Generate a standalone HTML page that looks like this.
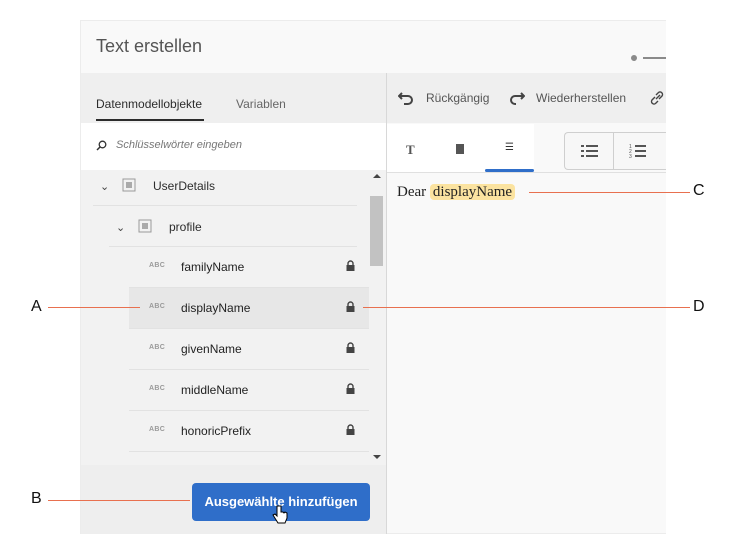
<!DOCTYPE html>
<html><head><meta charset="utf-8"><style>
*{margin:0;padding:0;box-sizing:border-box}
body{width:745px;height:554px;background:#fff;position:relative;overflow:hidden;font-family:"Liberation Sans","DejaVu Sans",sans-serif;color:#2c2c2c}
.a{position:absolute}
.t{font-size:12px}
.row{position:absolute;left:129px;width:240px;height:41px;border-bottom:1px solid #e2e2e2}
.row .abc{position:absolute;left:20px;top:15px;font-size:7px;font-weight:bold;color:#9a9a9a;letter-spacing:.3px}
.row .n{position:absolute;left:52px;top:13px;font-size:12px;color:#222}
.row .lk{position:absolute;left:217px;top:13px}
.ln{position:absolute;height:1px;background:#e8704f}
.lab{position:absolute;font-size:16px;color:#111}
</style></head><body>
<div class="a" style="left:80px;top:20px;width:586px;height:514px;border:1px solid #ececec;border-right:none;background:#f9f9f9"></div>
<div class="a" style="left:96px;top:36px;font-size:18px;color:#555">Text erstellen</div>
<div class="a" style="left:631px;top:55px;width:6px;height:6px;border-radius:50%;background:#8a8a8a"></div>
<div class="a" style="left:643px;top:57px;width:23px;height:2px;background:#8a8a8a"></div>
<!-- left panel -->
<div class="a" style="left:81px;top:73px;width:305px;height:50px;background:#efefef"></div>
<div class="a t" style="left:96px;top:97px;font-size:12px;color:#2c2c2c">Datenmodellobjekte</div>
<div class="a" style="left:96px;top:119px;width:108px;height:2px;background:#2c2c2c"></div>
<div class="a t" style="left:236px;top:97px;color:#666">Variablen</div>
<div class="a" style="left:81px;top:123px;width:305px;height:47px;background:#fff"></div>
<svg class="a" style="left:96px;top:140px" width="11" height="11"><circle cx="6.5" cy="4.5" r="3.3" fill="none" stroke="#333" stroke-width="1.3"/><line x1="4" y1="7" x2="1" y2="10" stroke="#333" stroke-width="1.5"/></svg>
<div class="a" style="left:116px;top:139px;font-size:11px;font-style:italic;color:#777">Schlüsselwörter eingeben</div>
<div class="a" style="left:81px;top:170px;width:305px;height:295px;background:#f2f2f2"></div>
<div class="a" style="left:370px;top:196px;width:13px;height:70px;background:#c2c2c2"></div>
<div class="a" style="left:373px;top:174px;width:0;height:0;border-left:4px solid transparent;border-right:4px solid transparent;border-bottom:4px solid #444"></div>
<div class="a" style="left:373px;top:455px;width:0;height:0;border-left:4px solid transparent;border-right:4px solid transparent;border-top:4px solid #444"></div>
<div class="a" style="left:100px;top:180px;font-size:11px;color:#444">⌄</div>
<svg class="a" style="left:122px;top:178px" width="14" height="14"><rect x="1" y="1" width="12" height="12" fill="none" stroke="#999"/><rect x="4" y="4" width="6" height="6" fill="#aaa"/></svg>
<div class="a t" style="left:153px;top:179px">UserDetails</div>
<div class="a" style="left:93px;top:205px;width:264px;height:1px;background:#e2e2e2"></div>
<div class="a" style="left:116px;top:221px;font-size:11px;color:#444">⌄</div>
<svg class="a" style="left:138px;top:219px" width="14" height="14"><rect x="1" y="1" width="12" height="12" fill="none" stroke="#999"/><rect x="4" y="4" width="6" height="6" fill="#aaa"/></svg>
<div class="a t" style="left:169px;top:220px">profile</div>
<div class="a" style="left:109px;top:246px;width:248px;height:1px;background:#e2e2e2"></div>
<div class="row" style="top:247px"><span class="abc">ABC</span><span class="n">familyName</span><svg class="lk" width="9" height="11"><path d="M2 5V3.5a2.5 2.5 0 0 1 5 0V5" fill="none" stroke="#444" stroke-width="1.4"/><rect x="0.5" y="5" width="8" height="6" fill="#444"/></svg></div>
<div class="row" style="top:288px;background:#e7e7e7"><span class="abc">ABC</span><span class="n">displayName</span><svg class="lk" width="9" height="11"><path d="M2 5V3.5a2.5 2.5 0 0 1 5 0V5" fill="none" stroke="#444" stroke-width="1.4"/><rect x="0.5" y="5" width="8" height="6" fill="#444"/></svg></div>
<div class="row" style="top:329px"><span class="abc">ABC</span><span class="n">givenName</span><svg class="lk" width="9" height="11"><path d="M2 5V3.5a2.5 2.5 0 0 1 5 0V5" fill="none" stroke="#444" stroke-width="1.4"/><rect x="0.5" y="5" width="8" height="6" fill="#444"/></svg></div>
<div class="row" style="top:370px"><span class="abc">ABC</span><span class="n">middleName</span><svg class="lk" width="9" height="11"><path d="M2 5V3.5a2.5 2.5 0 0 1 5 0V5" fill="none" stroke="#444" stroke-width="1.4"/><rect x="0.5" y="5" width="8" height="6" fill="#444"/></svg></div>
<div class="row" style="top:411px"><span class="abc">ABC</span><span class="n">honoricPrefix</span><svg class="lk" width="9" height="11"><path d="M2 5V3.5a2.5 2.5 0 0 1 5 0V5" fill="none" stroke="#444" stroke-width="1.4"/><rect x="0.5" y="5" width="8" height="6" fill="#444"/></svg></div>
<div class="a" style="left:81px;top:465px;width:305px;height:69px;background:#eeeeee"></div>
<div class="a" style="left:192px;top:483px;width:178px;height:38px;background:#2f6ec9;border-radius:4px;color:#fff;font-weight:bold;font-size:13px;text-align:center;line-height:38px">Ausgewählte hinzufügen</div>
<svg class="a" style="left:272px;top:505px" width="16" height="20"><path d="M5 1v10l-2-2-2 1 5 8h7l2-5v-5l-2-1-1 1-1-1-2 0V1z" fill="#fff" stroke="#000" stroke-width="1"/></svg>
<div class="a" style="left:386px;top:73px;width:1px;height:461px;background:#d8d8d8"></div>
<!-- right -->
<div class="a" style="left:387px;top:73px;width:279px;height:50px;background:#efefef"></div>
<svg class="a" style="left:398px;top:91px" width="16" height="14"><path d="M4 2L1 5l3 3M1 5h9a4 4 0 0 1 0 8H6" fill="none" stroke="#444" stroke-width="2"/></svg>
<div class="a t" style="left:426px;top:91px;color:#555">Rückgängig</div>
<svg class="a" style="left:509px;top:91px" width="16" height="14"><path d="M12 2l3 3-3 3M15 5H6a4 4 0 0 0 0 8h1" fill="none" stroke="#444" stroke-width="2"/></svg>
<div class="a t" style="left:536px;top:91px;color:#555">Wiederherstellen</div>
<svg class="a" style="left:649px;top:90px" width="16" height="16"><path d="M7 9l4-4M6 7L3 10a2.5 2.5 0 0 0 3.5 3.5L9 11M10 9l3-3A2.5 2.5 0 0 0 9.5 2.5L7 5" fill="none" stroke="#444" stroke-width="1.4"/></svg>
<div class="a" style="left:387px;top:123px;width:279px;height:49px;background:#f9f9f9"></div>
<div class="a" style="left:387px;top:124px;width:147px;height:48px;background:#fff"></div>
<div class="a" style="left:406px;top:142px;font-size:13px;font-weight:bold;color:#555;font-family:'Liberation Serif',serif">T</div>
<div class="a" style="left:456px;top:144px;width:8px;height:10px;background:#555"></div>
<div class="a" style="left:505px;top:142px;font-size:10px;color:#333">☰</div>
<div class="a" style="left:485px;top:169px;width:49px;height:3px;background:#2f6ec9;border-radius:2px"></div>
<div class="a" style="left:564px;top:132px;width:102px;height:38px;border:1px solid #cfcfcf;border-right:none;border-radius:4px 0 0 4px;background:#f7f7f7"></div>
<div class="a" style="left:613px;top:132px;width:1px;height:38px;background:#cfcfcf"></div>
<svg class="a" style="left:581px;top:145px" width="18" height="13"><g fill="#555"><rect x="0" y="0" width="3" height="2"/><rect x="5" y="0" width="12" height="2"/><rect x="0" y="5" width="3" height="2"/><rect x="5" y="5" width="12" height="2"/><rect x="0" y="10" width="3" height="2"/><rect x="5" y="10" width="12" height="2"/></g></svg>
<svg class="a" style="left:629px;top:142px" width="18" height="18"><g fill="#555"><rect x="6" y="3" width="11" height="2"/><rect x="6" y="8" width="11" height="2"/><rect x="6" y="13" width="11" height="2"/></g><text x="0" y="6" font-size="5" fill="#555">1</text><text x="0" y="11" font-size="5" fill="#555">2</text><text x="0" y="16" font-size="5" fill="#555">3</text></svg>
<div class="a" style="left:387px;top:172px;width:279px;height:1px;background:#e0e0e0"></div>
<div class="a" style="left:397px;top:184px;font-family:'Liberation Serif',serif;font-size:15px;color:#222">Dear <span style="background:#fbe3a0;border-radius:4px;padding:0 3px">displayName</span></div>
<!-- annotations -->
<div class="ln" style="left:529px;top:192px;width:161px"></div>
<div class="lab" style="left:693px;top:182px">C</div>
<div class="ln" style="left:48px;top:307px;width:92px"></div>
<div class="lab" style="left:31px;top:298px">A</div>
<div class="ln" style="left:363px;top:307px;width:327px"></div>
<div class="lab" style="left:693px;top:298px">D</div>
<div class="ln" style="left:48px;top:500px;width:142px"></div>
<div class="lab" style="left:31px;top:490px">B</div>
</body></html>
